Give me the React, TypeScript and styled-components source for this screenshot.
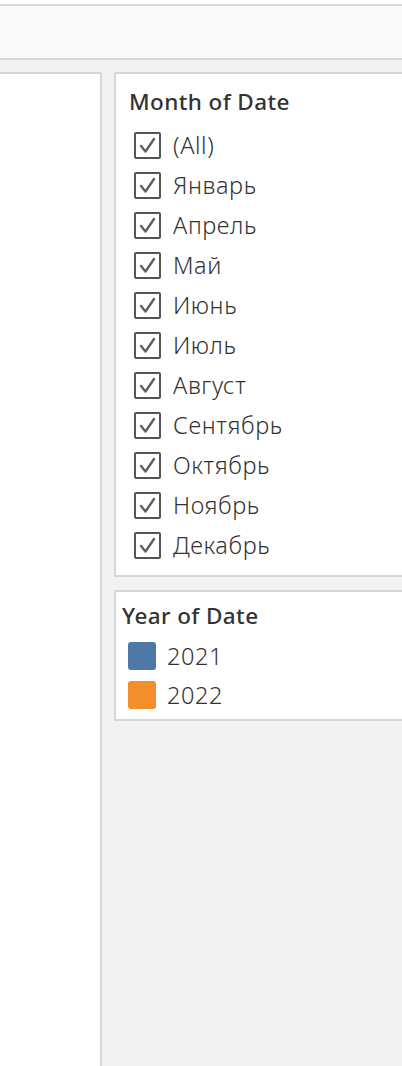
import React from "react";
import styled, { createGlobalStyle } from "styled-components";

const Global = createGlobalStyle`
  html, body { margin: 0; padding: 0; background: #ffffff; overflow: hidden; }
  body { font-family: "Noto Sans", "Liberation Sans", sans-serif; color: #333333; }
`;

const Page = styled.div`
  width: 402px;
  height: 1066px;
  display: flex;
  flex-direction: column;
  overflow: hidden;
  padding-top: 4px;
  box-sizing: border-box;
`;

const TopBar = styled.div`
  height: 52px;
  flex: none;
  background: #f9f9f9;
  border-top: 2px solid #d9d9d9;
  border-bottom: 2px solid #d9d9d9;
`;

const Main = styled.div`
  flex: 1;
  display: flex;
  gap: 12px;
  padding-top: 12px;
  background: #f2f2f2;
  min-height: 0;
`;

const LeftPanel = styled.div`
  width: 100px;
  flex: none;
  background: #ffffff;
  border-top: 2px solid #d6d6d6;
  border-right: 2px solid #d6d6d6;
`;

const RightColumn = styled.div`
  flex: 1;
  display: flex;
  flex-direction: column;
  gap: 13px;
  min-width: 0;
`;

const Card = styled.div<{ $pad: number; $padTop: number; $padBottom: number }>`
  width: 320px;
  background: #ffffff;
  border: 2px solid #d6d6d6;
  border-right: none;
  padding: ${(p) => p.$padTop}px 0 ${(p) => p.$padBottom}px ${(p) => p.$pad}px;
  box-sizing: border-box;
`;

const Title = styled.div<{ $gap: number }>`
  font-size: 22.5px;
  font-weight: 500;
  letter-spacing: 0.4px;
  line-height: 30px;
  color: #333333;
  margin-bottom: ${(p) => p.$gap}px;
  white-space: nowrap;
`;

const CheckRow = styled.div`
  height: 40px;
  display: flex;
  align-items: center;
  gap: 12px;
  padding-left: 5px;
`;

const Box = styled.div`
  width: 27px;
  height: 27px;
  box-sizing: border-box;
  border: 2px solid #555555;
  border-radius: 2px;
  display: flex;
  align-items: center;
  justify-content: center;
  flex: none;
`;

const Label = styled.span`
  font-size: 23.5px;
  font-weight: 350;
  letter-spacing: 0.6px;
  line-height: 30px;
  color: #333333;
  white-space: nowrap;
`;

const LegendRow = styled.div`
  height: 39px;
  display: flex;
  align-items: center;
  gap: 11px;
  padding-left: 6px;
`;

const Swatch = styled.div<{ $color: string }>`
  width: 28px;
  height: 28px;
  border-radius: 3px;
  background: ${(p) => p.$color};
  flex: none;
`;

const months = [
  "(All)",
  "Январь",
  "Апрель",
  "Май",
  "Июнь",
  "Июль",
  "Август",
  "Сентябрь",
  "Октябрь",
  "Ноябрь",
  "Декабрь",
];

const years = [
  { label: "2021", color: "#4e79a7" },
  { label: "2022", color: "#f28e2b" },
];

const Check = () => (
  <svg width="21" height="21" viewBox="0 0 21 21">
    <path d="M4 11 L8.5 16.5 L17 4" fill="none" stroke="#606060" strokeWidth="2.4" strokeLinecap="round" strokeLinejoin="round" />
  </svg>
);

export default function App() {
  return (
    <>
      <Global />
      <Page>
        <TopBar />
        <Main>
          <LeftPanel />
          <RightColumn>
            <Card $pad={13} $padTop={13} $padBottom={10}>
              <Title $gap={8}>Month of Date</Title>
              {months.map((m) => (
                <CheckRow key={m}>
                  <Box>
                    <Check />
                  </Box>
                  <Label>{m}</Label>
                </CheckRow>
              ))}
            </Card>
            <Card $pad={6} $padTop={9} $padBottom={5}>
              <Title $gap={5}>Year of Date</Title>
              {years.map((y) => (
                <LegendRow key={y.label}>
                  <Swatch $color={y.color} />
                  <Label>{y.label}</Label>
                </LegendRow>
              ))}
            </Card>
          </RightColumn>
        </Main>
      </Page>
    </>
  );
}
